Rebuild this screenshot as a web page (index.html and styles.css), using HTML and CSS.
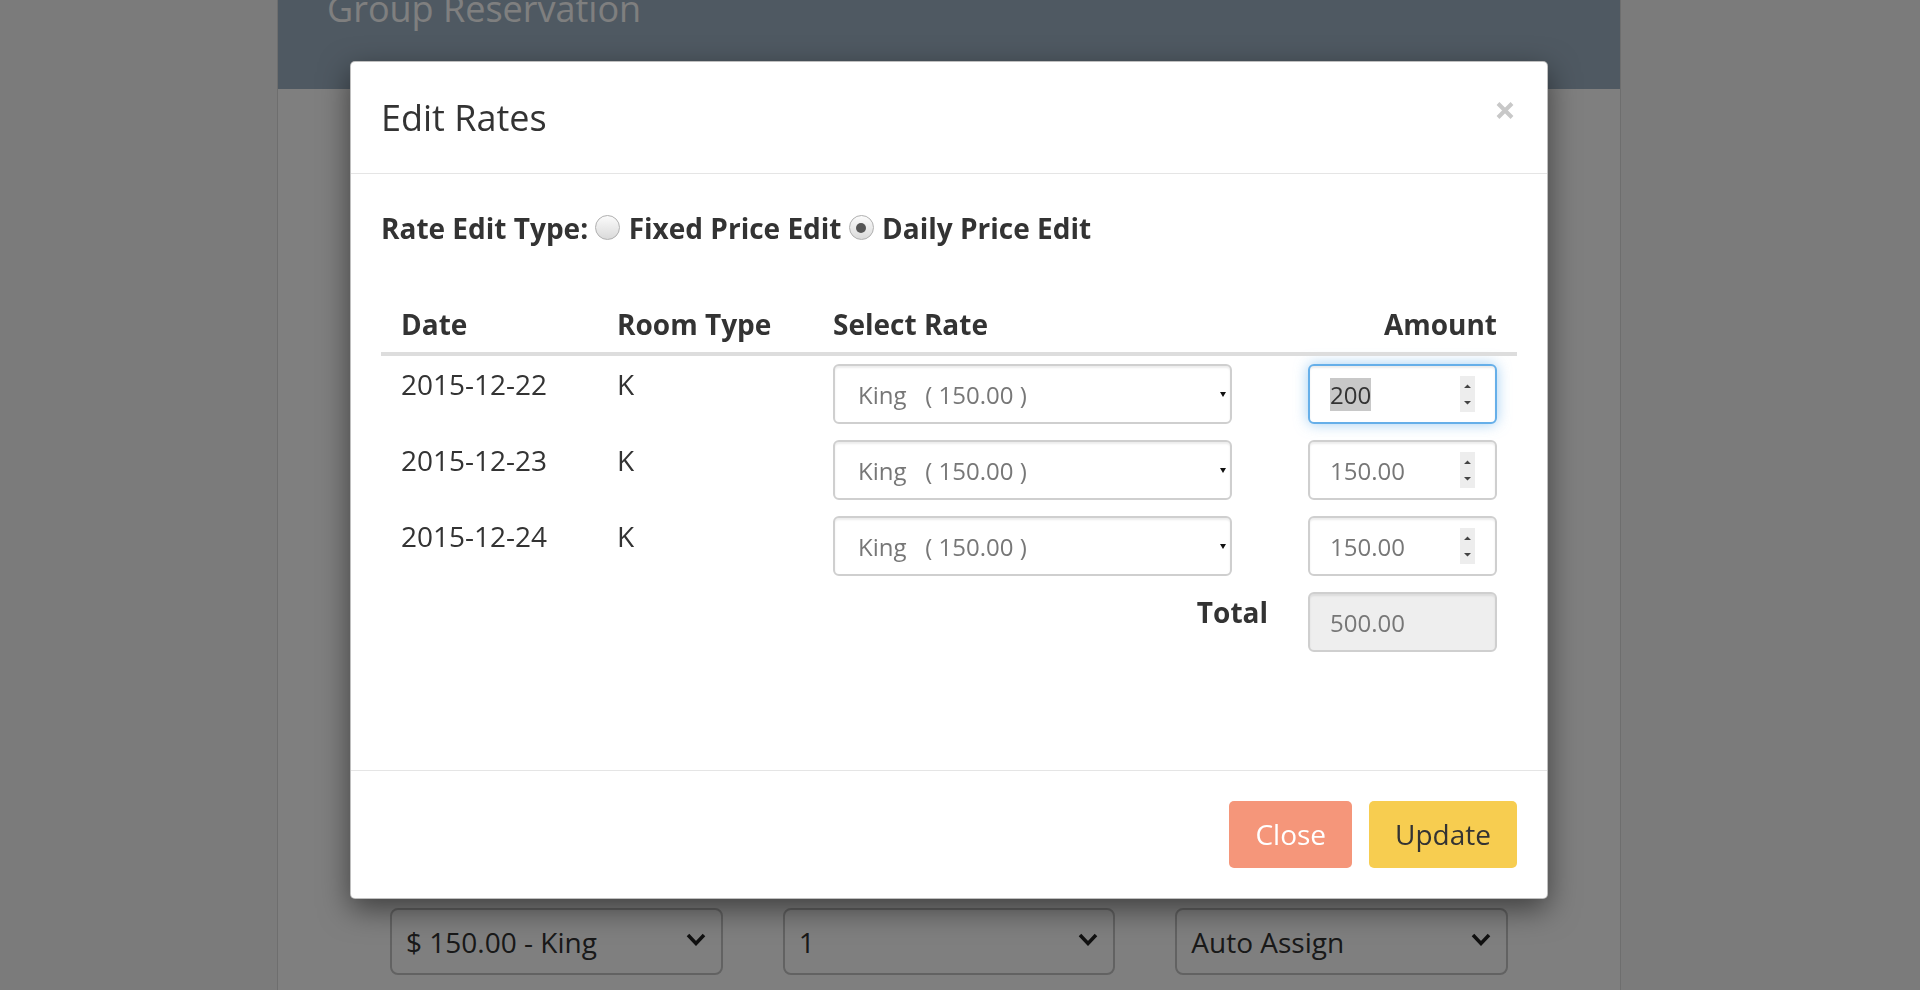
FILE: index.html
```html
<!DOCTYPE html>
<html lang="en">
<head>
<meta charset="utf-8">
<title>Edit Rates</title>
<link rel="stylesheet" href="styles.css">
</head>
<body>
<div class="page">
  <div class="panel-head"><h2 class="panel-title">Group Reservation</h2></div>
  <div class="panel-body">
    <div class="form-row">
      <div class="fake-select"><span>$ 150.00 - King</span><svg class="chev" width="20" height="13" viewBox="0 0 20 13"><path d="M2 2 L10 10.5 L18 2" fill="none" stroke="#222" stroke-width="3.5"/></svg></div>
      <div class="fake-select"><span>1</span><svg class="chev" width="20" height="13" viewBox="0 0 20 13"><path d="M2 2 L10 10.5 L18 2" fill="none" stroke="#222" stroke-width="3.5"/></svg></div>
      <div class="fake-select"><span>Auto Assign</span><svg class="chev" width="20" height="13" viewBox="0 0 20 13"><path d="M2 2 L10 10.5 L18 2" fill="none" stroke="#222" stroke-width="3.5"/></svg></div>
    </div>
  </div>
</div>

<div class="backdrop"></div>

<div class="modal">
  <div class="modal-header">
    <h4 class="modal-title">Edit Rates</h4>
    <button class="close" type="button" aria-label="Close"><svg width="18" height="17" viewBox="0 0 18 17"><path d="M2 1.5 L16 15.5 M16 1.5 L2 15.5" stroke="#c8c8c8" stroke-width="4"/></svg></button>
  </div>
  <div class="modal-body">
    <div class="rate-type"><span>Rate Edit Type:</span> <span class="radio"></span> <span>Fixed Price Edit</span> <span class="radio checked"></span> <span>Daily Price Edit</span></div>
    <table class="rates">
      <colgroup><col class="c-date"><col class="c-room"><col class="c-rate"><col class="c-amount"></colgroup>
      <thead>
        <tr><th>Date</th><th>Room Type</th><th>Select Rate</th><th class="right">Amount</th></tr>
      </thead>
      <tbody>
        <tr>
          <td>2015-12-22</td><td>K</td>
          <td><div class="sel"><span>King   ( 150.00 )</span><svg width="6" height="5" viewBox="0 0 6 5"><path d="M0 0 H6 L3 5 Z" fill="#111"/></svg></div></td>
          <td><div class="amount focus"><span class="selected">200</span><svg class="spin" width="15" height="36" viewBox="0 0 15 36"><rect width="15" height="36" fill="#ededed"/><path d="M4 12 H11 L7.5 8.5 Z M4 25 H11 L7.5 28.5 Z" fill="#444"/></svg></div></td>
        </tr>
        <tr>
          <td>2015-12-23</td><td>K</td>
          <td><div class="sel"><span>King   ( 150.00 )</span><svg width="6" height="5" viewBox="0 0 6 5"><path d="M0 0 H6 L3 5 Z" fill="#111"/></svg></div></td>
          <td><div class="amount"><span>150.00</span><svg class="spin" width="15" height="36" viewBox="0 0 15 36"><rect width="15" height="36" fill="#ededed"/><path d="M4 12 H11 L7.5 8.5 Z M4 25 H11 L7.5 28.5 Z" fill="#444"/></svg></div></td>
        </tr>
        <tr>
          <td>2015-12-24</td><td>K</td>
          <td><div class="sel"><span>King   ( 150.00 )</span><svg width="6" height="5" viewBox="0 0 6 5"><path d="M0 0 H6 L3 5 Z" fill="#111"/></svg></div></td>
          <td><div class="amount"><span>150.00</span><svg class="spin" width="15" height="36" viewBox="0 0 15 36"><rect width="15" height="36" fill="#ededed"/><path d="M4 12 H11 L7.5 8.5 Z M4 25 H11 L7.5 28.5 Z" fill="#444"/></svg></div></td>
        </tr>
        <tr>
          <td colspan="3" class="total-label">Total</td>
          <td><div class="amount readonly"><span>500.00</span></div></td>
        </tr>
      </tbody>
    </table>
  </div>
  <div class="modal-footer">
    <button class="btn btn-close" type="button">Close</button>
    <button class="btn btn-update" type="button">Update</button>
  </div>
</div>
</body>
</html>
```

FILE: styles.css
```css
html, body {
  margin: 0;
  height: 990px;
  overflow: hidden;
}

body {
  background: #f6f6f6;
  font-family: "Open Sans", "DejaVu Sans", sans-serif;
  color: #333;
}

/* underlying page */
.page {
  width: 1344px;
  min-height: 990px;
  margin-left: 277px;
  background: #fff;
  border-left: 1px solid #dcdcdc;
  border-right: 1px solid #dcdcdc;
  box-sizing: border-box;
}

.panel-head {
  height: 89px;
  background: #9eb2c4;
  padding-left: 49px;
  overflow: hidden;
}

.panel-title {
  margin: -11px 0 0;
  font-size: 36px;
  font-weight: 400;
  line-height: 39.6px;
  color: #fff;
}

.panel-body {
  padding: 819px 112px 0;
}

.form-row {
  display: grid;
  grid-template-columns: repeat(3, 1fr);
  column-gap: 60px;
}

.fake-select {
  height: 67px;
  box-sizing: border-box;
  border: 2px solid #c4c4c4;
  border-radius: 8px;
  padding: 0 15px 0 14px;
  display: flex;
  align-items: center;
  justify-content: space-between;
  font-size: 28px;
  color: #333;
  background: #fff;
}

.chev {
  display: block;
  margin-top: -5px;
}

/* overlay */
.backdrop {
  position: fixed;
  inset: 0;
  background: rgba(0, 0, 0, 0.5);
}

/* modal */
.modal {
  position: absolute;
  left: 350px;
  top: 61px;
  width: 1198px;
  box-sizing: border-box;
  background: #fff;
  border: 1px solid rgba(0, 0, 0, 0.25);
  border-radius: 5px;
  box-shadow: 0 10px 30px rgba(0, 0, 0, 0.5);
}

.modal-header {
  padding: 30px;
  border-bottom: 1px solid #e5e5e5;
  display: flex;
  justify-content: space-between;
  align-items: flex-start;
}

.modal-title {
  margin: 0;
  font-size: 36px;
  font-weight: 400;
  line-height: 1.42857;
  color: #333;
}

.close {
  display: block;
  width: 18px;
  height: 17px;
  padding: 0;
  margin: 10px 3px 0 0;
  border: 0;
  background: none;
}

.close svg {
  display: block;
}

.modal-body {
  padding: 30px;
}

.rate-type {
  padding-top: 4px;
  font-size: 28px;
  font-weight: 700;
  line-height: 40px;
  white-space: nowrap;
}

.radio {
  display: inline-block;
  position: relative;
  width: 25px;
  height: 25px;
  margin-right: 1px;
  box-sizing: border-box;
  border: 1px solid #b0b0b0;
  border-radius: 50%;
  background: linear-gradient(#fbfbfb, #dadada);
  vertical-align: -1px;
}

.radio.checked::after {
  content: "";
  position: absolute;
  left: 6.5px;
  top: 6.5px;
  width: 10px;
  height: 10px;
  border-radius: 50%;
  background: #555;
}

/* table */
.rates {
  width: 1136px;
  table-layout: fixed;
  border-collapse: collapse;
  margin: 48px 0 80px;
  font-size: 28px;
  line-height: 40px;
}

.c-date { width: 216px; }
.c-room { width: 216px; }
.c-rate { width: 475px; }
.c-amount { width: 229px; }

.rates th,
.rates td {
  padding: 8px 20px;
  text-align: left;
  vertical-align: top;
  white-space: nowrap;
}

.rates th {
  font-weight: 700;
  border-bottom: 4px solid #ddd;
}

.rates th.right,
.rates td.total-label {
  text-align: right;
}

.rates td.total-label {
  font-weight: 700;
}

.sel {
  width: 399px;
  height: 60px;
  box-sizing: border-box;
  border: 2px solid #cfcfcf;
  border-radius: 6px;
  padding: 0 4px 0 23px;
  display: flex;
  align-items: center;
  justify-content: space-between;
  font-size: 24px;
  line-height: normal;
  color: #777;
  white-space: pre;
  background: #fff;
  box-shadow: inset 0 2px 2px rgba(0, 0, 0, 0.075);
}

.sel svg {
  display: block;
}

.amount {
  height: 60px;
  box-sizing: border-box;
  border: 2px solid #cfcfcf;
  border-radius: 6px;
  padding: 0 20px;
  display: flex;
  align-items: center;
  justify-content: space-between;
  font-size: 24px;
  line-height: normal;
  color: #777;
  background: #fff;
  box-shadow: inset 0 2px 2px rgba(0, 0, 0, 0.075);
}

.amount.focus {
  border-color: #66afe9;
  box-shadow: inset 0 2px 2px rgba(0, 0, 0, 0.075), 0 0 14px rgba(102, 175, 233, 0.6);
}

.amount .selected {
  background: #c8c8c8;
  color: #333;
}

.amount.readonly {
  background: #eee;
}

.spin {
  display: block;
}

/* footer */
.modal-footer {
  padding: 30px;
  border-top: 1px solid #e5e5e5;
  display: flex;
  justify-content: flex-end;
  gap: 17px;
}

.btn {
  font-family: inherit;
  font-size: 28px;
  line-height: 41px;
  padding: 12px 25px;
  border: 1px solid transparent;
  border-radius: 5px;
  cursor: pointer;
}

.btn-close {
  background: #f5967a;
  color: #fff;
}

.btn-update {
  background: #f7cd50;
  color: #333;
}
```
